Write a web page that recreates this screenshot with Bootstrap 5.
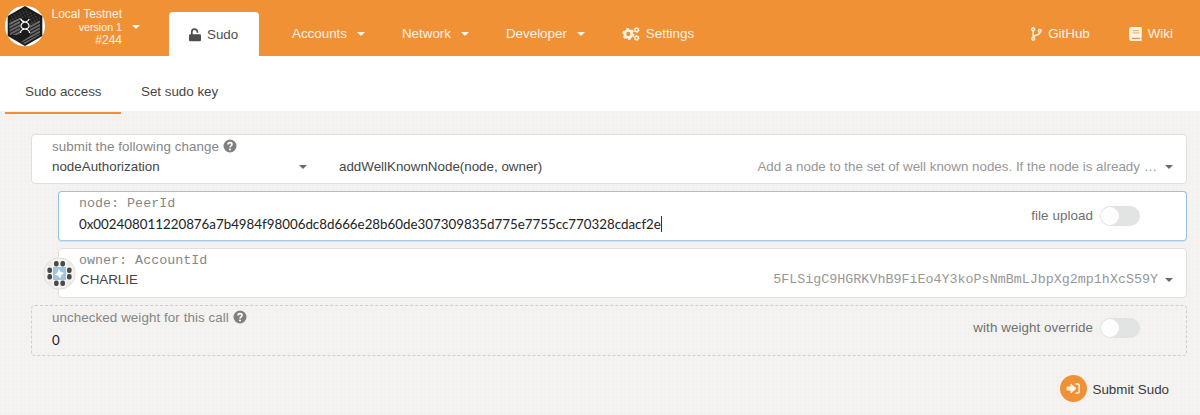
<!DOCTYPE html>
<html lang="en">
<head>
<meta charset="utf-8">
<meta name="viewport" content="width=device-width, initial-scale=1">
<title>Sudo access</title>
<link rel="stylesheet" href="https://cdn.jsdelivr.net/npm/bootstrap@5.3.0/dist/css/bootstrap.min.css">
<style>
  body { font-family: "Liberation Sans", Arial, sans-serif; font-size: 13.36px; line-height: 20px; color: #464646; height: 415px; overflow: hidden;
    background: #f4f3f1 radial-gradient(circle at 1px 1px, #f1f0ee 0.7px, transparent 1px) 0 0 / 4px 4px; }
  svg { display: block; flex: none; }
  .topbar { height: 56px; background: #f19135; }
  .topbar, .menu-item { color: #fff3e6; }
  .chain { width: 169px; padding: 5px 0 0 5px; }
  .chain-info { width: 77px; line-height: 13px; padding-top: 3px; font-size: 12px; white-space: nowrap; }
  .chain-info .version { font-size: 10.7px; }
  .caret { border: 4px solid transparent; border-top: 4.500px solid currentColor; border-bottom: 0; flex: none; }
  .chain .caret { margin: 20px 0 0 10px; }
  .tab-active { width: 90px; height: 44px; background: #fff; color: #4e4e4e; border-radius: 4px 4px 0 0; padding: 1px 0 0 20px; gap: 6px; }
  .menu-item { height: 44px; padding-bottom: 1px; text-decoration: none; }
  .menu-item:hover { color: #fff; }
  .menu-main { gap: 37px; padding-left: 33px; }
  .menu-side { gap: 39px; padding-right: 27px; }
  .with-caret { gap: 10px; }
  .with-icon { gap: 6px; }
  .subtabs { height: 55px; background: #fff; padding-left: 5px; }
  .subtab { height: 58px; padding: 0 20px; line-height: 72px; white-space: nowrap; }
  .subtab.current { width: 116px; border-bottom: 2px solid #f19135; }
  .form-area { padding: 23px 13px 0 31px; }
  .field { background: #fff; border: 1px solid #dfdfde; border-radius: 4px; height: 50px; padding: 4px 13px 0 20px; position: relative; }
  .field + .field { margin-top: 7px; }
  .nested { margin-left: 27px; }
  .focused { border-color: #96c1df; border-bottom-color: #a9cce4; box-shadow: 0 1px #cfe2ef; }
  .optional { background: transparent; border: 1px dashed #d0cfcd; height: 51px; }
  .label-text { color: #868686; line-height: 16px; height: 18px; gap: 4px; }
  .wide { letter-spacing: .08px; }
  .mono { font-family: "Liberation Mono", monospace; }
  .muted-value { color: #979797; }
  .value-row { height: 20px; white-space: nowrap; }
  .address-row { padding-left: 1px; height: 18px; }
  .dark { color: #6a6a6a; }
  .pallet { width: 255px; margin-right: 32px; }
  .hash { font-family: Lato, sans-serif; font-size: 13.34px; color: #222; }
  .cursor-bar { width: 1px; height: 16px; background: #333; }
  .toggle-box { position: absolute; right: 46px; top: 14px; gap: 7px; color: #707070; letter-spacing: .08px; }
  .optional .toggle-box { top: 12px; }
  .toggle { width: 40px; height: 20px; border-radius: 10px; background: #e2e4e3; padding: 1px; }
  .toggle::before { content: ""; display: block; width: 18px; height: 18px; border-radius: 50%; background: #fff; }
  .identicon { position: absolute; left: -16px; top: 8px; }
  .submit { gap: 6px; margin: 19px 18px 0 0; color: #3a3a3a; background: none; border: 0; padding: 0; }
  .submit span { padding-top: 2px; }
</style>
</head>
<body>
<header class="topbar d-flex align-items-end">
  <div class="chain d-flex align-self-stretch">
    <svg width="40" height="42" viewBox="0 0 40 42">
      <defs>
        <pattern id="hatch" width="4" height="3" patternUnits="userSpaceOnUse" patternTransform="rotate(-28)"><path d="M0 1h4" stroke="#c4c4c4" stroke-width=".9"/></pattern>
        <pattern id="dots" width="3" height="3" patternUnits="userSpaceOnUse" patternTransform="rotate(-28)"><path d="M0 1h1.3" stroke="#888" stroke-width=".8"/></pattern>
      </defs>
      <ellipse cx="20" cy="21" rx="20" ry="20.3" fill="#fff"/>
      <path d="M20 1 37.300 11v20L20 41 2.700 31V11z" fill="#1a1a1a"/>
      <path d="M20 4 35 12v5L25 20 5 19v-7z" fill="url(#dots)"/>
      <path d="M4 17 15 13v17L5 30zM25 19l10-4v15l-15 9-4-2 9-6z" fill="url(#hatch)"/>
      <path d="M15 13h10v16H15z" fill="#1a1a1a"/>
      <path d="M15.500 13.500q1 3 4.500 3.500t4 3.500-4 3.500-4.500 4M24 14q-.5 2.500-4 3t-4 3.500 4 3.500 4.500 4" fill="none" stroke="#fff" stroke-width="1.200"/>
    </svg>
    <div class="chain-info text-end">
      <div>Local Testnet</div>
      <div class="version">version 1</div>
      <div>#244</div>
    </div>
    <span class="caret"></span>
  </div>
  <div class="tab-active d-flex align-items-center">
    <svg width="12" height="14" viewBox="0 0 12 14"><path d="M2.800 7V4a2.800 2.800 0 0 1 5.600-.2v1" fill="none" stroke="#4e4e4e" stroke-width="1.700"/><rect y="6.300" width="12" height="7" rx="1.200" fill="#4e4e4e"/></svg>
    <span>Sudo</span>
  </div>
  <nav class="menu-main d-flex">
    <a href="#" class="menu-item with-caret d-flex align-items-center">Accounts<span class="caret"></span></a>
    <a href="#" class="menu-item with-caret d-flex align-items-center">Network<span class="caret"></span></a>
    <a href="#" class="menu-item with-caret d-flex align-items-center">Developer<span class="caret"></span></a>
    <a href="#" class="menu-item with-icon d-flex align-items-center">
      <svg width="18" height="14" viewBox="0 0 18 14" fill="none" stroke="#fff3e6">
        <circle cx="6.300" cy="7" r="3.500" stroke-width="2.700"/>
        <circle cx="6.300" cy="7" r="5.200" stroke-width="1.700" stroke-dasharray="2.700 2.745"/>
        <circle cx="14.600" cy="3" r="1.700" stroke-width="1.500"/>
        <circle cx="14.600" cy="3" r="2.600" stroke-width=".9" stroke-dasharray="1.300 1.422"/>
        <circle cx="14.600" cy="11" r="1.700" stroke-width="1.500"/>
        <circle cx="14.600" cy="11" r="2.600" stroke-width=".9" stroke-dasharray="1.300 1.422"/>
      </svg>
      Settings</a>
  </nav>
  <nav class="menu-side d-flex ms-auto">
    <a href="#" class="menu-item with-icon d-flex align-items-center">
      <svg width="11" height="14" viewBox="0 0 11 14" fill="none" stroke="#fff3e6" stroke-width="1.400"><circle cx="2.200" cy="2.200" r="1.400"/><circle cx="2.200" cy="11.800" r="1.400"/><circle cx="8.800" cy="3.800" r="1.400"/><path d="M2.200 3.600v6.800M8.800 5.200c0 3.600-5.200 2-6.300 4.800" stroke-width="1.600"/></svg>
      GitHub</a>
    <a href="#" class="menu-item with-icon d-flex align-items-center">
      <svg width="13" height="14" viewBox="0 0 13 14"><path d="M2.600 0H12a.8.8 0 0 1 .8.800v8.700a.8.8 0 0 1-.4.700v2.100a.8.800 0 0 1 .4.700v.2a.7.700 0 0 1-.7.700H2.600A2.600 2.600 0 0 1 0 11.400V2.600A2.600 2.600 0 0 1 2.600 0z" fill="#fff3e6"/><path d="M3.600 3.700h6.600M3.600 5.900h6.600" stroke="#f19135" stroke-width=".8"/><path d="M2.800 11.400H11" stroke="#f19135" stroke-width="1.300"/></svg>
      Wiki</a>
  </nav>
</header>

<div class="subtabs d-flex">
  <div class="subtab current">Sudo access</div>
  <div class="subtab">Set sudo key</div>
</div>

<main class="form-area">
  <div class="field">
    <div class="label-text wide d-flex">submit the following change
      <svg width="14" height="14" viewBox="0 0 14 14"><circle cx="7" cy="7" r="6.500" fill="#808080"/><path d="M5 5.600C5 3 9 3 9 5.300 9 7 7 6.700 7 8.500" fill="none" stroke="#fff" stroke-width="1.600"/><circle cx="7" cy="10.500" r="1" fill="#fff"/></svg>
    </div>
    <div class="value-row d-flex align-items-center">
      <div class="pallet d-flex align-items-center justify-content-between"><span>nodeAuthorization</span><span class="caret dark"></span></div>
      <span>addWellKnownNode(node, owner)</span>
      <span class="muted-value ms-auto">Add a node to the set of well known nodes. If the node is already …</span>
      <span class="caret dark ms-2"></span>
    </div>
  </div>

  <div class="field nested focused">
    <div class="label-text mono">node: PeerId</div>
    <div class="value-row d-flex align-items-center">
      <span class="hash">0x002408011220876a7b4984f98006dc8d666e28b60de307309835d775e7755cc770328cdacf2e</span><span class="cursor-bar"></span>
    </div>
    <div class="toggle-box d-flex align-items-center">file upload<span class="toggle"></span></div>
  </div>

  <div class="field nested">
    <svg class="identicon" width="33" height="33" viewBox="0 0 33 33">
      <circle cx="16.500" cy="16.500" r="15.700" fill="#f4f3f2" stroke="#dededd"/>
      <g fill="#e9e9e8"><circle cx="7" cy="7" r="2.300"/><circle cx="26" cy="7" r="2.300"/><circle cx="7" cy="26" r="2.300"/><circle cx="26" cy="26" r="2.300"/></g>
      <rect x="10" y="10" width="13" height="13" fill="#9bc5e3"/>
      <path d="m15.800 12 1.600 2.700 3.800 1.300-2.700 1.800-1.300 3.700-1.800-2.600-3.800-1.300 2.800-1.900z" fill="#fff"/>
      <g fill="#4a4a4a"><rect x="11" y="4" width="4.600" height="5.400" rx="2"/><rect x="17.400" y="4" width="4.600" height="5.400" rx="2"/><rect x="11" y="23.600" width="4.600" height="5.400" rx="2"/><rect x="17.400" y="23.600" width="4.600" height="5.400" rx="2"/><rect x="4.400" y="10.400" width="4.600" height="5.600" rx="2"/><rect x="4.400" y="17" width="4.600" height="5.600" rx="2"/><rect x="24" y="10.400" width="4.600" height="5.600" rx="2"/><rect x="24" y="17" width="4.600" height="5.600" rx="2"/></g>
    </svg>
    <div class="label-text mono">owner: AccountId</div>
    <div class="value-row address-row d-flex align-items-center">
      <span>CHARLIE</span>
      <span class="mono muted-value ms-auto">5FLSigC9HGRKVhB9FiEo4Y3koPsNmBmLJbpXg2mp1hXcS59Y</span>
      <span class="caret dark" style="margin-left:7px"></span>
    </div>
  </div>

  <div class="field optional">
    <div class="label-text wide d-flex">unchecked weight for this call
      <svg width="14" height="14" viewBox="0 0 14 14"><circle cx="7" cy="7" r="6.500" fill="#808080"/><path d="M5 5.600C5 3 9 3 9 5.300 9 7 7 6.700 7 8.500" fill="none" stroke="#fff" stroke-width="1.600"/><circle cx="7" cy="10.500" r="1" fill="#fff"/></svg>
    </div>
    <div class="value-row hash d-flex align-items-center pt-1">0</div>
    <div class="toggle-box d-flex align-items-center">with weight override<span class="toggle"></span></div>
  </div>

  <div class="d-flex justify-content-end">
    <button class="submit d-flex align-items-center">
      <svg width="27" height="27" viewBox="0 0 27 27"><circle cx="13.500" cy="13.500" r="13.500" fill="#f19135"/><path d="M7 12h4V9l5 4.500-5 4.500v-3H7z" fill="#fff3e6" stroke="#fff3e6" stroke-linejoin="round"/><path d="M15.500 9h2.200a1.500 1.500 0 0 1 1.500 1.500v6a1.500 1.500 0 0 1-1.500 1.500h-2.200" fill="none" stroke="#fff3e6" stroke-width="1.500"/></svg>
      <span>Submit Sudo</span>
    </button>
  </div>
</main>
<script src="https://cdn.jsdelivr.net/npm/bootstrap@5.3.0/dist/js/bootstrap.bundle.min.js"></script>
</body>
</html>
